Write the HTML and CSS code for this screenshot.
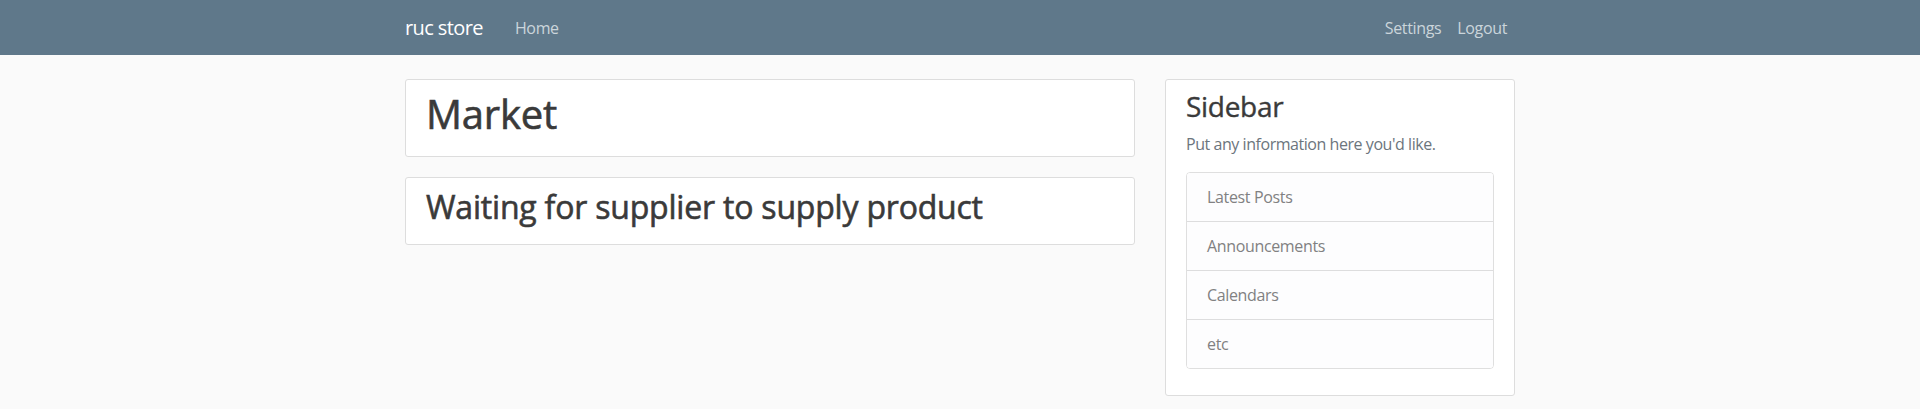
FILE: index.html
```html
<!DOCTYPE html>
<html lang="en">
<head>
<meta charset="utf-8">
<title>ruc store</title>
<link rel="stylesheet" href="styles.css">
</head>
<body>
<header class="site-header">
  <nav class="navbar">
    <div class="nav-container">
      <a class="navbar-brand" href="#">ruc store</a>
      <div class="navbar-nav nav-left">
        <a class="nav-link" href="#">Home</a>
      </div>
      <div class="navbar-nav">
        <a class="nav-link" href="#">Settings</a>
        <a class="nav-link" href="#">Logout</a>
      </div>
    </div>
  </nav>
</header>
<main class="container">
  <div class="row">
    <div class="col-main">
      <div class="content-section">
        <h1 class="title-xl">Market</h1>
      </div>
      <div class="content-section">
        <h2 class="title-lg">Waiting for supplier to supply product</h2>
      </div>
    </div>
    <div class="col-side">
      <div class="content-section">
        <h3 class="title-md">Sidebar</h3>
        <p class="text-muted">Put any information here you'd like.</p>
        <ul class="list-group">
          <li class="list-group-item">Latest Posts</li>
          <li class="list-group-item">Announcements</li>
          <li class="list-group-item">Calendars</li>
          <li class="list-group-item">etc</li>
        </ul>
        <p class="spacer"></p>
      </div>
    </div>
  </div>
</main>
</body>
</html>
```

FILE: styles.css
```css
* { box-sizing: border-box; }
html, body { margin: 0; }
body {
  background: #fafafa;
  color: #333333;
  font-family: "Open Sans", "Noto Sans", sans-serif;
  font-size: 16px;
  line-height: 1.5;
  letter-spacing: -0.35px;
}
.navbar {
  background-color: #5f788a;
  padding: 7.5px 16px;
}
.nav-container {
  width: 1140px;
  margin: 0 auto;
  padding: 0 15px;
  display: flex;
  align-items: center;
}
.navbar-brand {
  color: #ffffff;
  font-size: 20px;
  line-height: 30px;
  padding: 5px 0;
  margin-right: 24px;
  text-decoration: none;
  white-space: nowrap;
  letter-spacing: -0.6px;
}
.navbar-nav { display: flex; }
.nav-left { margin-right: auto; }
.nav-link {
  color: #cbd5db;
  padding: 8px;
  text-decoration: none;
}
.container {
  width: 1140px;
  margin: 0 auto;
  padding: 24px 15px 0;
}
.row {
  display: flex;
  margin: 0 -15px;
}
.col-main { width: 760px; padding: 0 15px; }
.col-side { width: 380px; padding: 0 15px; }
.content-section {
  background: #ffffff;
  padding: 10px 20px;
  border: 1px solid #dddddd;
  border-radius: 3px;
  margin-bottom: 20px;
}
.title-xl, .title-lg, .title-md {
  color: #3a3a3a;
  font-weight: 500;
  line-height: 1.2;
  margin: 0 0 8px;
  -webkit-text-stroke: 0.6px #3a3a3a;
}
.title-xl { font-size: 40px; letter-spacing: -0.2px; }
.title-lg { font-size: 32px; letter-spacing: -0.2px; }
.title-md { font-size: 28px; letter-spacing: -0.3px; -webkit-text-stroke: 0.4px #3a3a3a; }
.text-muted {
  color: #6c757d;
  margin: 0 0 16px;
  letter-spacing: -0.45px;
}
.list-group {
  list-style: none;
  margin: 0;
  padding: 0;
  border: 1px solid rgba(0,0,0,.125);
  border-radius: 4px;
  overflow: hidden;
}
.list-group-item {
  color: #818182;
  background: #fdfdfe;
  padding: 12px 20px;
  border-top: 1px solid rgba(0,0,0,.125);
}
.list-group-item:first-child { border-top: none; }
.spacer { margin: 0 0 16px; }
```
